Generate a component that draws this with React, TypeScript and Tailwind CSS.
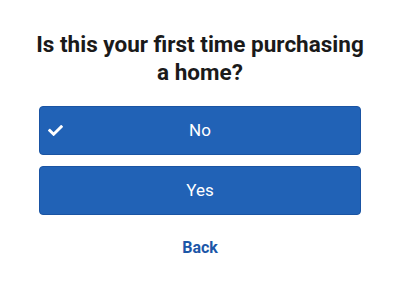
import { FaCheck } from 'react-icons/fa';

export default function App() {
    return (
        <div className="w-[400px] h-[300px] bg-white flex flex-col items-center pt-[30px]" style={{ fontFamily: 'Roboto, "Liberation Sans", sans-serif' }}>
            <h1 className="w-[336px] text-[22.5px] leading-[28px] font-bold text-[#1a1a1a] text-center">
                Is this your first time purchasing a home?
            </h1>

            <div className="w-[322px] mt-[20px] flex flex-col gap-[11px]">
                <button className="relative h-[49px] rounded-[4px] bg-[#2162b6] border border-[#1a54a3] text-white text-[17px] flex items-center justify-center">
                    <FaCheck size={15} className="absolute left-[8px]" />
                    No
                </button>
                <button className="h-[49px] rounded-[4px] bg-[#2162b6] border border-[#1a54a3] text-white text-[17px] flex items-center justify-center">
                    Yes
                </button>
            </div>

            <button className="mt-[21px] text-[16px] font-bold text-[#1c57a8]">Back</button>
        </div>
    );
}
